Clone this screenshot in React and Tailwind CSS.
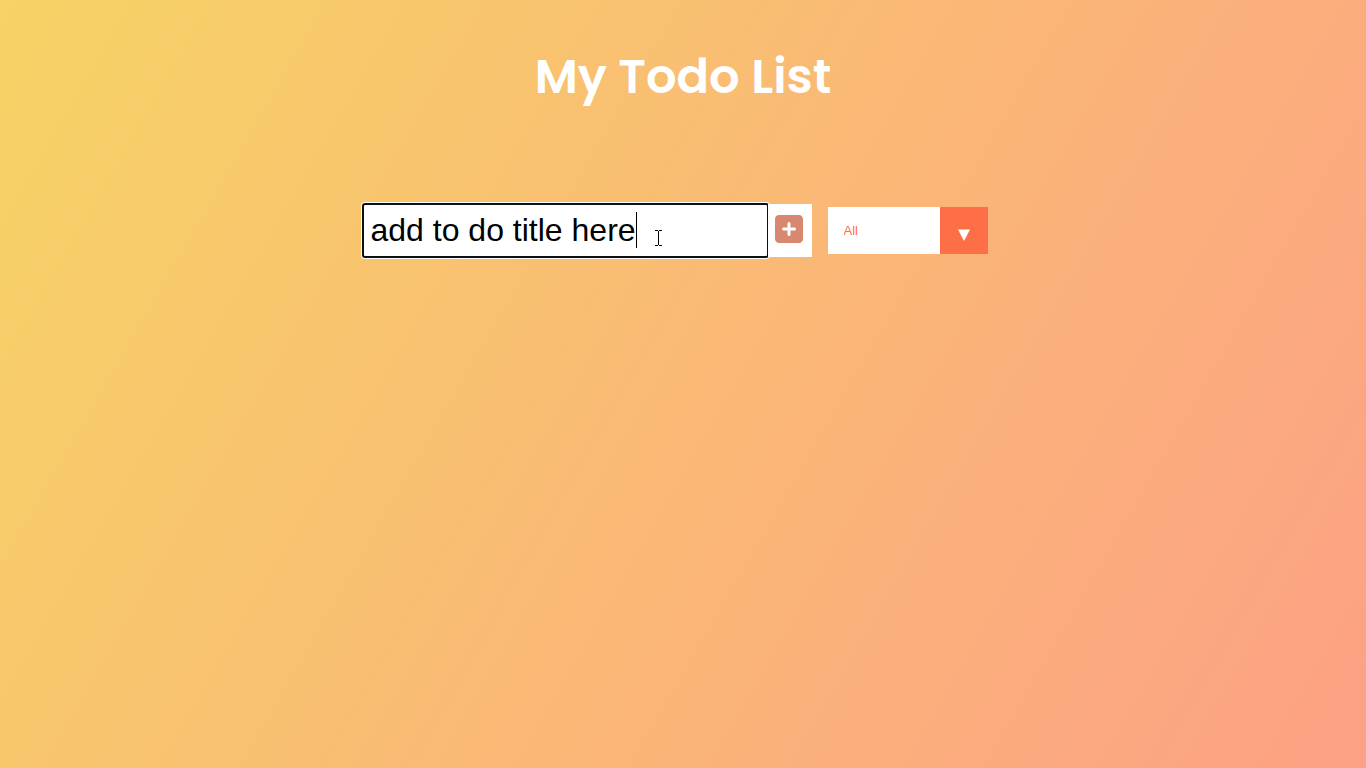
import { useState } from "react";

function PlusSquareIcon() {
  return (
    <svg viewBox="0 0 448 512" className="h-8 w-7" fill="currentColor" aria-hidden="true">
      <path d="M64 32C28.700 32 0 60.700 0 96V416c0 35.300 28.700 64 64 64H384c35.300 0 64-28.700 64-64V96c0-35.300-28.700-64-64-64H64zM200 344V280H136c-13.300 0-24-10.700-24-24s10.700-24 24-24h64V168c0-13.300 10.700-24 24-24s24 10.700 24 24v64h64c13.300 0 24 10.700 24 24s-10.700 24-24 24H248v64c0 13.300-10.700 24-24 24s-24-10.700-24-24z" />
    </svg>
  );
}

function TextPointer() {
  return (
    <svg
      viewBox="0 0 7 16"
      className="pointer-events-none absolute top-[26px] left-[292px] z-10 h-4 w-[7px]"
      fill="none"
      stroke="#000"
      shapeRendering="crispEdges"
      aria-hidden="true"
    >
      <path d="M0 .5h3M4 .5h3M3.500 1v14M0 15.500h3M4 15.500h3" />
    </svg>
  );
}

export default function App() {
  const [title, setTitle] = useState("add to do title here");
  const [filter, setFilter] = useState("all");

  return (
    <div className="min-h-screen bg-[linear-gradient(120deg,#f6d365_0%,#fda085_100%)] font-['Liberation_Sans',Arial,sans-serif]">
      <header className="flex min-h-[20vh] items-center justify-center">
        <h1 className="font-['Poppins','Inter',sans-serif] text-5xl font-semibold text-white">My Todo List</h1>
      </header>
      <form
        className="flex min-h-[20vh] items-center justify-center"
        onSubmit={(event) => event.preventDefault()}
      >
        <div className="relative flex">
          <input
            type="text"
            aria-label="Todo title"
            value={title}
            onChange={(event) => setTitle(event.target.value)}
            className="h-[53px] w-[405px] rounded-[2px] bg-white p-2 text-[32px] text-black caret-transparent ring-2 ring-white outline-2 -outline-offset-1 outline-[#101010]"
          />
          <span className="pointer-events-none absolute top-2 left-[273px] h-9 w-px bg-black" />
          <TextPointer />
          <button
            type="submit"
            aria-label="Add todo"
            className="relative flex h-[53px] w-11 cursor-pointer bg-white pt-[9px] pl-[7px] text-[#d88771]"
          >
            <PlusSquareIcon />
          </button>
        </div>
        <div className="relative mx-4 flex">
          <select
            aria-label="Filter todos"
            value={filter}
            onChange={(event) => setFilter(event.target.value)}
            className="h-[47px] w-40 cursor-pointer appearance-none bg-white px-4 text-[13px] text-[#ff6f47] outline-none"
          >
            <option value="all">All</option>
            <option value="completed">Completed</option>
            <option value="uncompleted">Uncompleted</option>
          </select>
          <span className="pointer-events-none absolute inset-y-0 right-0 flex w-12 items-center justify-center bg-[#ff6f47] pt-2.5 text-white">
            <svg viewBox="0 0 12 12" className="h-3 w-3" fill="currentColor" aria-hidden="true">
              <path d="M0 .5h12L6 12z" />
            </svg>
          </span>
        </div>
      </form>
    </div>
  );
}
